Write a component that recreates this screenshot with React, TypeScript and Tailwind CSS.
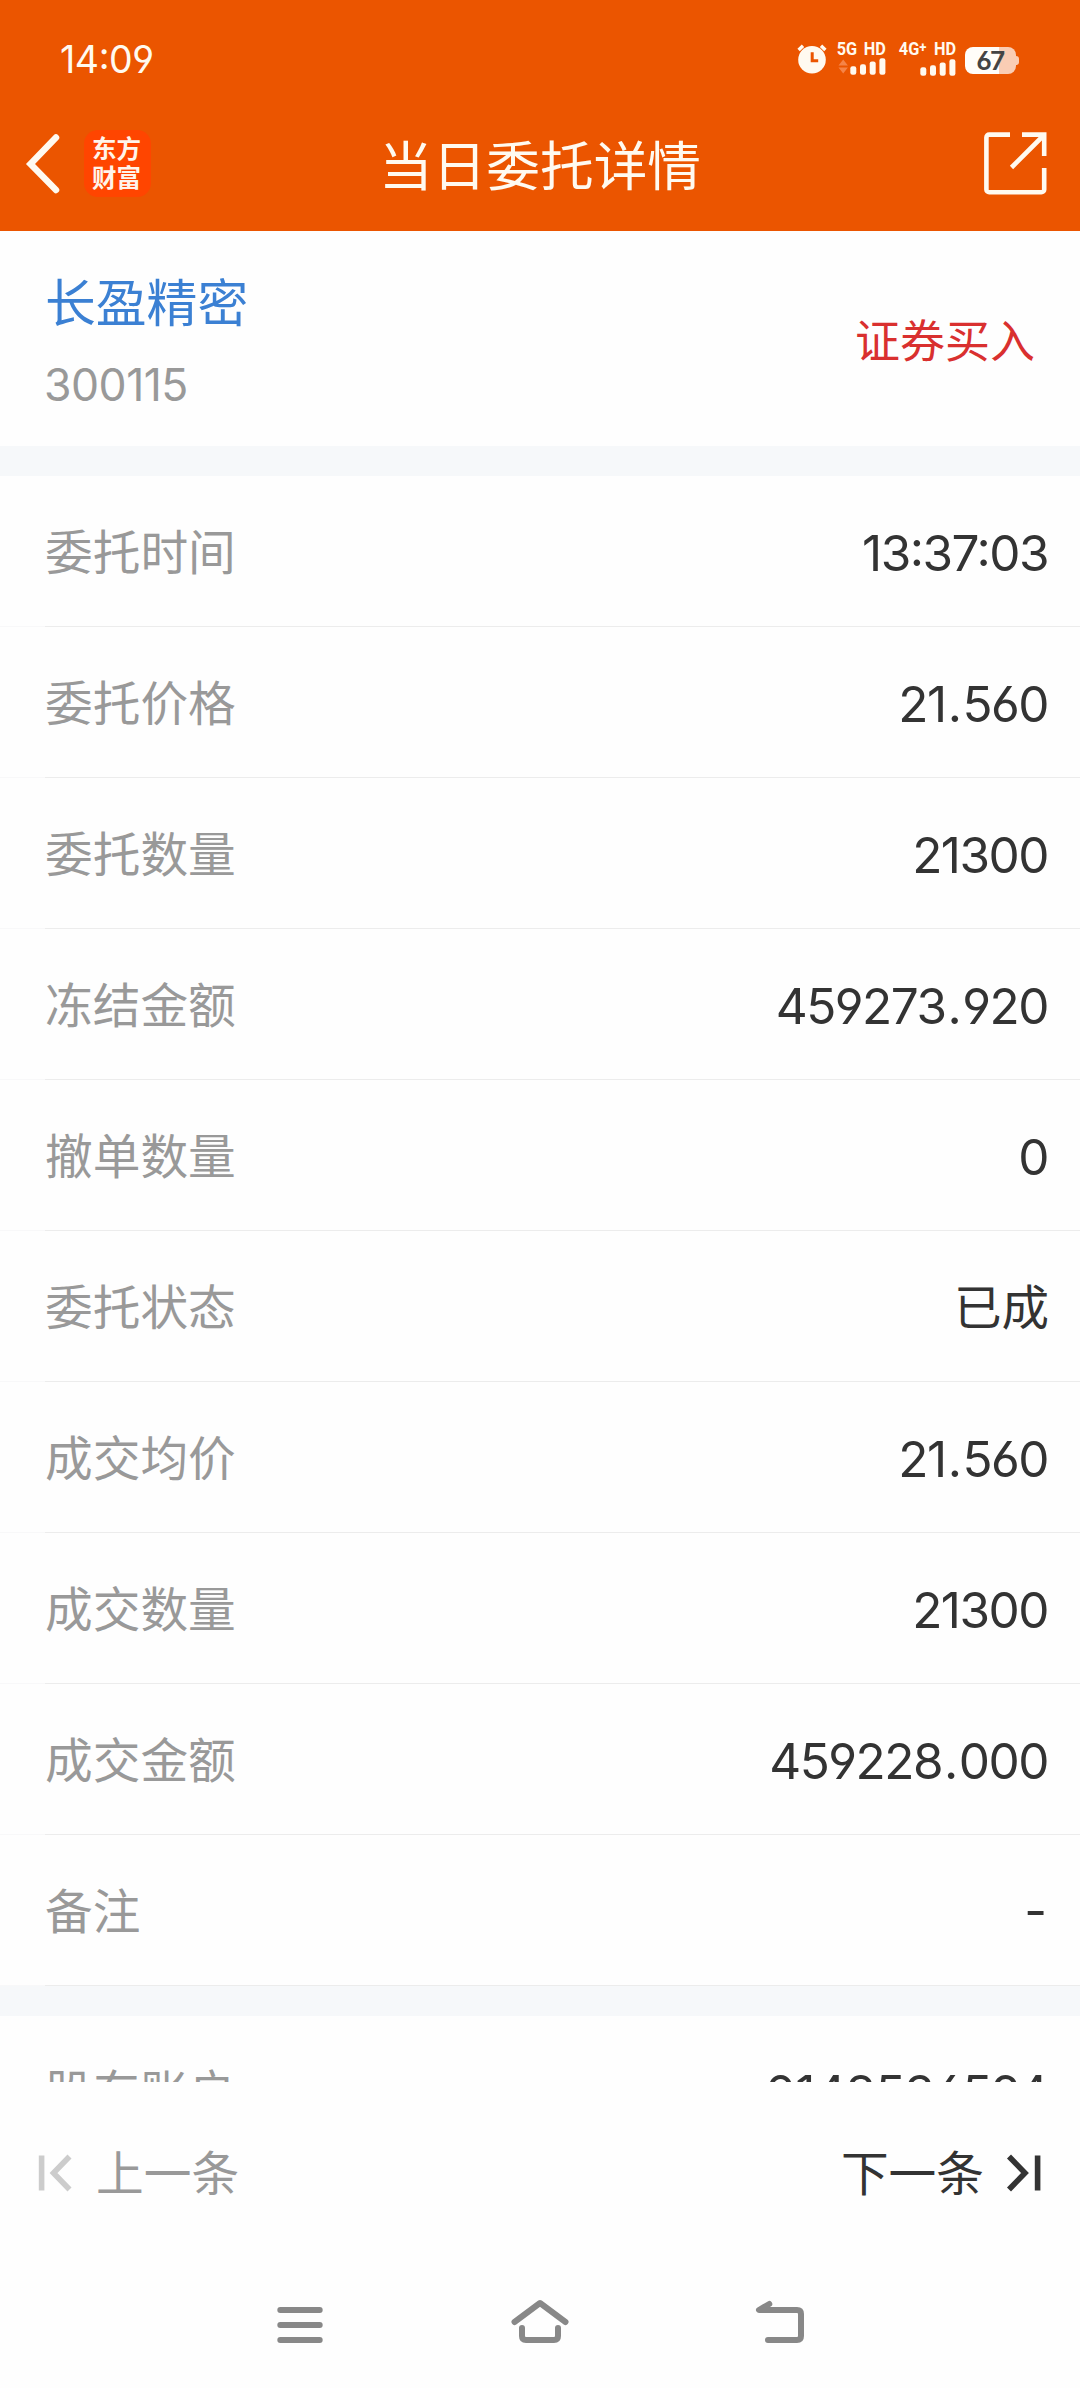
import React from "react";

const orderRows = [
  { label: "委托时间", value: "13:37:03" },
  { label: "委托价格", value: "21.560" },
  { label: "委托数量", value: "21300" },
  { label: "冻结金额", value: "459273.920" },
  { label: "撤单数量", value: "0" },
  { label: "委托状态", value: "已成" },
  { label: "成交均价", value: "21.560" },
  { label: "成交数量", value: "21300" },
  { label: "成交金额", value: "459228.000" },
  { label: "备注", value: "-" },
];

function AlarmIcon() {
  return (
    <svg className="h-[30px] w-[30px]" viewBox="0 0 30 30" fill="none">
      <circle cx="15" cy="15.7" r="13.8" fill="#fffaf0" />
      <path d="M1.6 6 6 1.8M28.4 6 24 1.8" stroke="#fffaf0" strokeWidth="3.4" />
      <path d="M15.2 8.2v8.6h6" stroke="#eb5500" strokeWidth="3" />
    </svg>
  );
}

function SignalBars({ arrows = false }: { arrows?: boolean }) {
  return (
    <svg className="h-[17px] w-[48px]" viewBox="0 0 48 17">
      {arrows && <path d="M.5 7.5 5.2 1.5l4.7 6zM.5 9.5l4.7 6 4.7-6z" fill="#f58448" />}
      <g fill="#fffaf0">
        <rect x="12.3" y="8.3" width="6" height="8.5" rx="2.2" />
        <rect x="22" y="6.3" width="6" height="10.5" rx="2.2" />
        <rect x="31.7" y="3.4" width="6" height="13.4" rx="2.2" />
        <rect x="41.4" y="0.2" width="6" height="16.6" rx="2.2" />
      </g>
    </svg>
  );
}

function StatusBar() {
  return (
    <div className="flex h-[104px] items-start justify-between pl-[60px] pr-[61px] text-[#fffaf0]">
      <span className="mt-[38px] text-[37.5px] leading-[44px] tracking-[-0.4px]">14:09</span>
      <div className="flex items-start">
        <div className="mt-[44px]">
          <AlarmIcon />
        </div>
        <div className="ml-[11px] mt-[40px] flex w-[48px] flex-col items-end">
          <span className="origin-right scale-x-[0.88] whitespace-nowrap font-['Roboto'] text-[18.5px] font-bold leading-[18px] [word-spacing:3px]">5G HD</span>
          <SignalBars arrows />
        </div>
        <div className="ml-[12px] mt-[40px] flex w-[58px] flex-col items-end">
          <span className="origin-right scale-x-[0.88] whitespace-nowrap font-['Roboto'] text-[18.5px] font-bold leading-[18px] [word-spacing:4px]">
            4G<span className="relative -top-[3px] text-[15px]">+</span> HD
          </span>
          <SignalBars />
        </div>
        <div className="ml-[9px] mt-[47px] flex items-center">
          <div className="flex h-[27px] w-[51px] items-center justify-center rounded-[8px] bg-[linear-gradient(90deg,#fffdf9_34px,#facdb4_34px)] text-[26px] font-semibold leading-[27px] tracking-[-0.5px] text-[#444]">
            67
          </div>
          <div className="h-[9px] w-[3px] rounded-r-[3px] bg-[#facdb4]" />
        </div>
      </div>
    </div>
  );
}

function TitleBar() {
  return (
    <div className="grid h-[127px] grid-cols-[1fr_auto_1fr] items-start px-[32px]">
      <div className="-ml-[7px] flex items-center pt-[26px]">
        <svg className="h-[60px] w-[36px]" viewBox="0 0 36 60" fill="none">
          <path d="M31 6.5 5.5 33 31 59" transform="translate(0 -3)" stroke="#fffaf0" strokeWidth="6.5" strokeLinecap="round" />
        </svg>
        <div className="ml-[23px] flex h-[67px] w-[67px] flex-col items-center justify-center rounded-[14px] bg-[#ff4500] pr-[2px] text-[24.5px] font-bold leading-[29px] text-[#fff4ea]">
          <span>东方</span>
          <span>财富</span>
        </div>
      </div>
      <h1 className="pt-[23px] text-[53.7px] leading-[80px] text-[#fffaf0]">当日委托详情</h1>
      <svg className="mt-[27px] h-[65px] w-[65px] justify-self-end" viewBox="0 0 65 65" fill="none" stroke="#fffaf0" strokeWidth="4.6">
        <path d="M27 3.6H6.2a2.8 2.8 0 0 0-2.8 2.8v52a2.8 2.8 0 0 0 2.8 2.8h52.2a2.8 2.8 0 0 0 2.8-2.8V37" />
        <path d="M39 3.6h22.2V25M61 4 28.5 36.5" />
      </svg>
    </div>
  );
}

function Value({ text }: { text: string }) {
  const isNumeric = /^[\d.:]+$/.test(text);
  if (text === "-") {
    return <span className="-mt-[4px] mr-[2px] text-[49.5px] leading-[70px] text-[#333]">-</span>;
  }
  if (!isNumeric) {
    return <span className="text-[47.5px] leading-[70px] text-[#333]">{text}</span>;
  }
  return (
    <span className={`mr-px text-[49.5px] leading-[70px] text-[#333] ${text.length === 10 && !text.includes(".") ? "tracking-[-0.9px]" : "tracking-[-1.5px]"}`}>
      {text.split(/(\.)/).map((part, i) =>
        part === "." ? (
          <span key={i} className="mx-[2px]">
            .
          </span>
        ) : (
          part
        ),
      )}
    </span>
  );
}

function Row({ label, value }: { label: string; value: string }) {
  return (
    <div className="flex h-[151px] flex-col">
      <div className="flex flex-1 items-center justify-between pl-[45px] pr-[31px] pt-[4px]">
        <span className="text-[47.7px] leading-[70px] text-[#999]">{label}</span>
        <Value text={value} />
      </div>
      <div className="flex h-px">
        <div className="w-[45px] bg-[#f8f8f9]" />
        <div className="flex-1 bg-[#ececec]" />
      </div>
    </div>
  );
}

export default function App() {
  return (
    <div className="flex h-[2388px] w-[1080px] flex-col overflow-hidden bg-[#fefefe] font-['Inter','Noto_Sans_CJK_SC',sans-serif] [font-feature-settings:'cv03','cv04','calt']">
      <header className="h-[231px] shrink-0 bg-[#eb5500]">
        <StatusBar />
        <TitleBar />
      </header>
      <main className="h-[1851px] shrink-0 overflow-hidden">
        <section className="flex h-[215px] items-center justify-between pl-[45px] pr-[45px] pt-[10px]">
          <div className="flex flex-col">
            <span className="text-[50.8px] leading-[74px] text-[#3b80d3]">长盈精密</span>
            <span className="-ml-px mt-[8px] text-[44.5px] leading-[72px] tracking-[-0.5px] text-[#999]">300115</span>
          </div>
          <span className="-mt-[3px] text-[45px] leading-[70px] text-[#d9302f]">证券买入</span>
        </section>
        <div className="h-[30px] bg-[#f6f8fa]" />
        {orderRows.map((row) => (
          <Row key={row.label} {...row} />
        ))}
        <div className="h-[30px] bg-[#f6f8fa]" />
        <Row label="股东账户" value="0148536594" />
      </main>
      <footer className="flex h-[182px] shrink-0 items-center justify-between pl-[38px] pr-[38px] text-[47.7px] leading-[70px]">
        <div className="flex items-center text-[#999]">
          <svg className="h-[38px] w-[36px]" viewBox="0 0 36 38" fill="none" stroke="#ccc" strokeWidth="5.6">
            <path d="M3.6 1.5v35M31.5 2.5 15.5 19l16 16.5" />
          </svg>
          <span className="ml-[22px] pt-[2px]">上一条</span>
        </div>
        <div className="flex items-center text-[#333]">
          <span className="pt-[2px]">下一条</span>
          <svg className="ml-[22px] h-[38px] w-[36px]" viewBox="0 0 36 38" fill="none" stroke="#333" strokeWidth="5.6">
            <path d="M31.6 1.5v35M3 2.5 19 19 3 35.5" />
          </svg>
        </div>
      </footer>
      <nav className="flex h-[124px] shrink-0 items-start justify-between px-[271px] pt-[30px]">
        <svg className="h-[60px] w-[60px]" viewBox="0 0 60 60" fill="none" stroke="#888" strokeWidth="6" strokeLinecap="round">
          <path d="M9.3 16h39.4M9.3 31h39.4M9.3 46h39.4" />
        </svg>
        <svg className="h-[60px] w-[60px]" viewBox="0 0 60 60" fill="none" stroke="#888" strokeWidth="6" strokeLinecap="round" strokeLinejoin="round">
          <path d="M4.5 28 30 9l25.5 19M12 34v8q0 4 4 4h28q4 0 4-4v-8" />
        </svg>
        <svg className="h-[60px] w-[60px]" viewBox="0 0 60 60" fill="none" stroke="#888" strokeWidth="6" strokeLinecap="round" strokeLinejoin="round">
          <path d="M20.3 10 10 16h38q4 0 4 4v22q0 4-4 4H19" />
        </svg>
      </nav>
    </div>
  );
}
